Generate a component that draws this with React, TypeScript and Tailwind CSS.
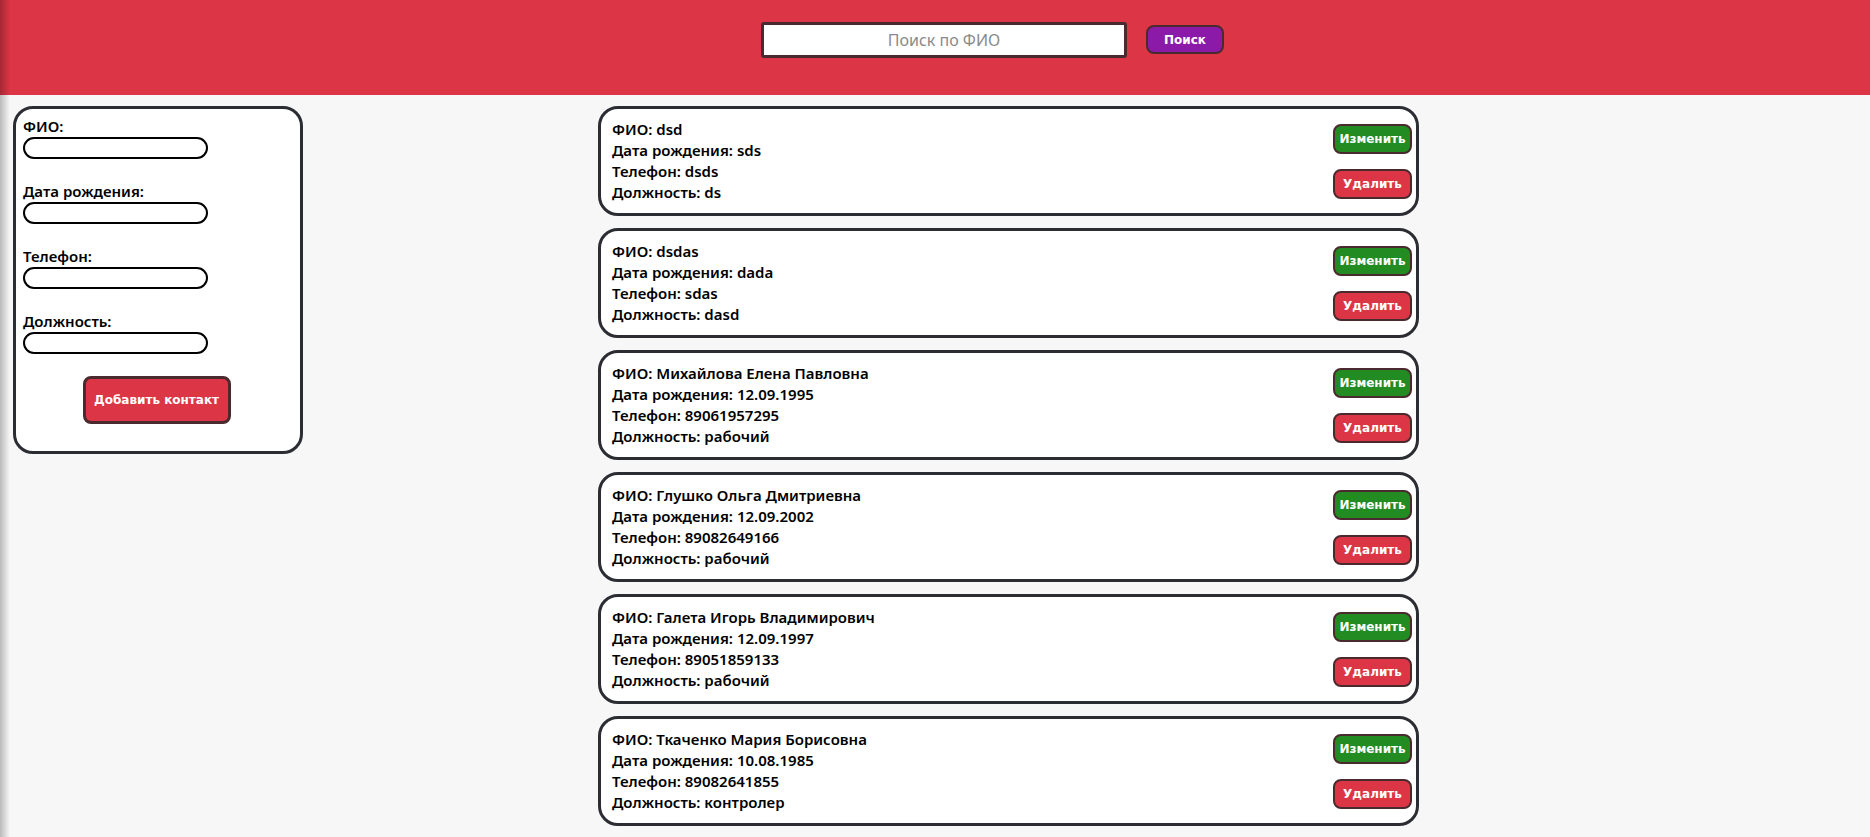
import React from "react";

const CONTACTS = [
  { fio: "dsd", birth: "sds", phone: "dsds", position: "ds" },
  { fio: "dsdas", birth: "dada", phone: "sdas", position: "dasd" },
  { fio: "Михайлова Елена Павловна", birth: "12.09.1995", phone: "89061957295", position: "рабочий" },
  { fio: "Глушко Ольга Дмитриевна", birth: "12.09.2002", phone: "89082649166", position: "рабочий" },
  { fio: "Галета Игорь Владимирович", birth: "12.09.1997", phone: "89051859133", position: "рабочий" },
  { fio: "Ткаченко Мария Борисовна", birth: "10.08.1985", phone: "89082641855", position: "контролер" },
];

const FIELDS = ["ФИО:", "Дата рождения:", "Телефон:", "Должность:"];

const btnFont = "font-['DejaVu_Sans',sans-serif] font-bold text-[12px] text-white";

const App = () => {
  return (
    <div className="relative min-h-screen bg-[#f7f7f7] text-black font-['Noto_Sans',sans-serif]">
      {/* left edge shade */}
      <div className="pointer-events-none absolute left-0 top-0 h-full w-[10px] bg-gradient-to-r from-black/25 to-transparent" />

      <header className="h-[95px] bg-[#dc3545] flex justify-center items-start pt-[22px] pl-[115px] gap-[19px]">
        <input
          placeholder="Поиск по ФИО"
          className="w-[366px] h-[36px] bg-white border-[3px] border-[#4a2a2e] rounded-[3px] text-center text-[16px] placeholder:text-[#8a8a8a] outline-none"
        />
        <button className={`mt-[3px] w-[78px] h-[29px] bg-[#8b1aa8] border-2 border-[#4a2a2e] rounded-[8px] ${btnFont}`}>
          Поиск
        </button>
      </header>

      <main className="flex items-start pt-[11px] pl-[13px]">
        <form className="w-[290px] bg-white border-[3px] border-[#2b2d33] rounded-[20px] pt-[7px] pl-[7px] pr-[7px] pb-[27px] flex flex-col">
          {FIELDS.map((label) => (
            <div key={label} className="flex flex-col mb-[22px] last:mb-[23px]">
              <label className="text-[15px] font-semibold leading-[21px]">{label}</label>
              <input className="w-[185px] h-[22px] border-2 border-black rounded-full bg-white outline-none" />
            </div>
          ))}
          <button
            type="button"
            className={`self-center ml-[-3px] w-[148px] h-[48px] bg-[#dc3545] border-[3px] border-[#4a2a2e] rounded-[8px] ${btnFont}`}
          >
            Добавить контакт
          </button>
        </form>

        <div className="ml-[295px] flex flex-col gap-[12px]">
          {CONTACTS.map((c, i) => (
            <div
              key={i}
              className="w-[821px] bg-white border-[3px] border-[#2b2d33] rounded-[20px] flex items-center justify-between pl-[11px] pr-[4px] py-[10px]"
            >
              <div className="text-[15px] font-semibold leading-[21px]">
                <div>ФИО: {c.fio}</div>
                <div>Дата рождения: {c.birth}</div>
                <div>Телефон: {c.phone}</div>
                <div>Должность: {c.position}</div>
              </div>
              <div className="flex flex-col gap-[15px]">
                <button className={`w-[79px] h-[30px] bg-[#228b22] border-2 border-[#4a2a2e] rounded-[8px] ${btnFont}`}>
                  Изменить
                </button>
                <button className={`w-[79px] h-[30px] bg-[#dc3545] border-2 border-[#4a2a2e] rounded-[8px] ${btnFont}`}>
                  Удалить
                </button>
              </div>
            </div>
          ))}
        </div>
      </main>
    </div>
  );
};

export default App;
